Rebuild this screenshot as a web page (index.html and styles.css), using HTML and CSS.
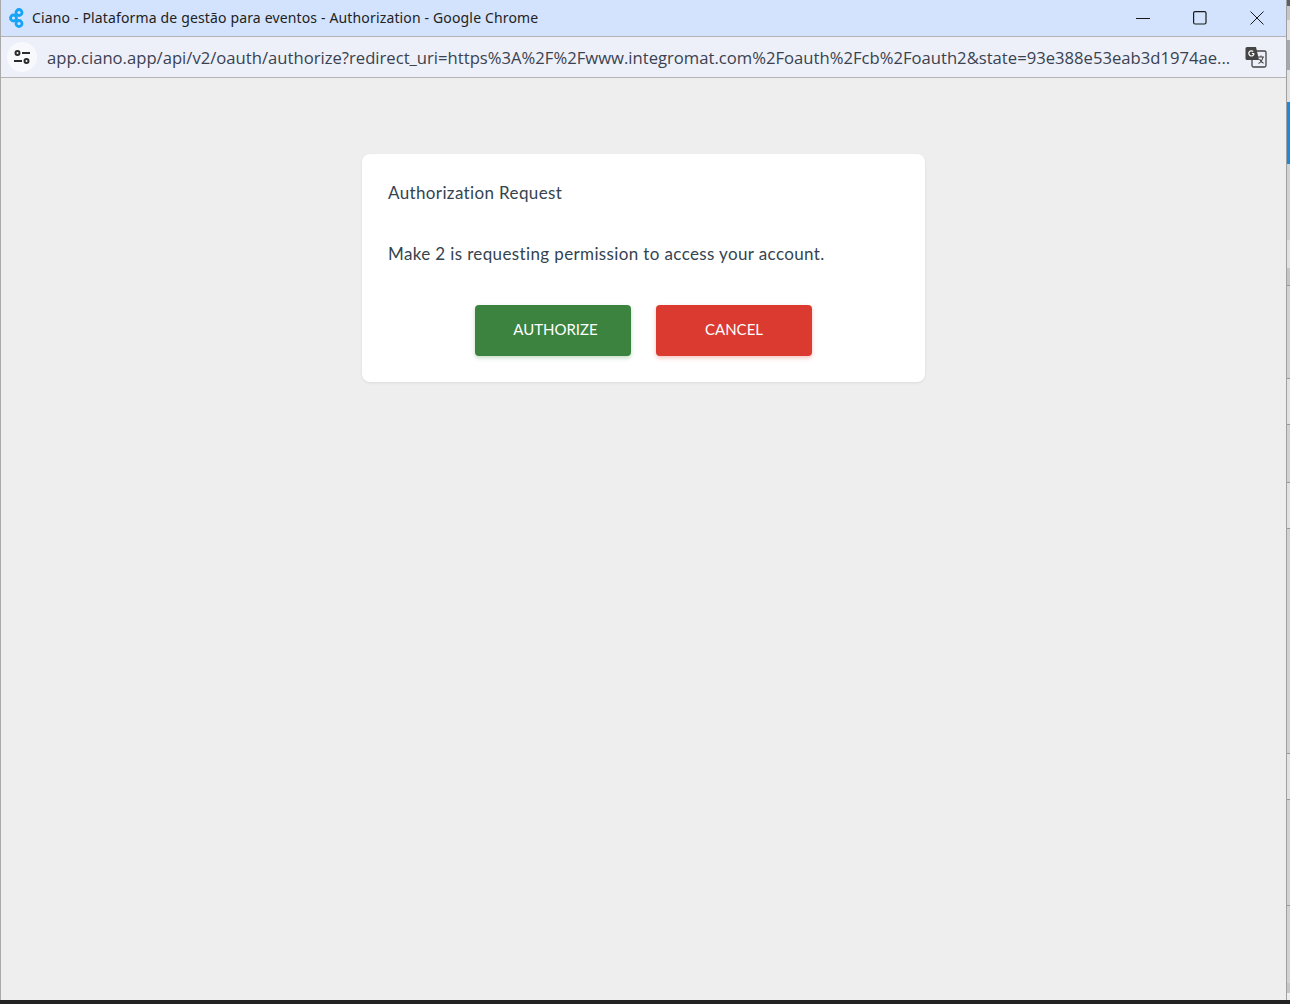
FILE: index.html
```html
<!DOCTYPE html>
<html lang="en">
<head>
    <meta charset="UTF-8">
    <meta name="viewport" content="width=device-width, initial-scale=1.0">
    <title>Ciano - Plataforma de gestão para eventos - Authorization - Google Chrome</title>
    <link rel="stylesheet" href="styles.css">
</head>
<body>
    <div class="screen">
        <div class="window">
            <div class="titlebar">
                <svg class="app-logo" width="16" height="20" viewBox="0 0 16 20" fill="none" stroke="#18a4f6" stroke-width="2.800">
                    <circle cx="10" cy="4.500" r="3"/>
                    <circle cx="4.500" cy="10" r="3"/>
                    <circle cx="10" cy="15.500" r="3"/>
                </svg>
                <span class="window-title">Ciano - Plataforma de gestão para eventos - Authorization - Google Chrome</span>
                <div class="window-controls">
                    <svg width="14" height="14" viewBox="0 0 14 14" stroke="#1a1a1a" stroke-width="1" fill="none"><path d="M0 7.500h14"/></svg>
                    <svg width="14" height="14" viewBox="0 0 14 14" stroke="#1a1a1a" stroke-width="1.200" fill="none"><rect x=".6" y=".6" width="12.400" height="12.400" rx="1.500"/></svg>
                    <svg width="14" height="14" viewBox="0 0 14 14" stroke="#1a1a1a" stroke-width="1" fill="none"><path d="M.5.500l13 13M13.500.500l-13 13"/></svg>
                </div>
            </div>
            <div class="addressbar">
                <div class="site-info">
                    <svg width="16" height="14" viewBox="0 0 16 14" fill="none" stroke="#2b2b2b" stroke-width="2"><circle cx="3.500" cy="3" r="2"/><path d="M8 3h8M0 11h8"/><circle cx="12.500" cy="11" r="2"/></svg>
                </div>
                <span class="url">app.ciano.app/api/v2/oauth/authorize?redirect_uri=https%3A%2F%2Fwww.integromat.com%2Foauth%2Fcb%2Foauth2&amp;state=93e388e53eab3d1974ae...</span>
                <svg class="translate" width="22" height="22" viewBox="0 0 22 22">
                    <rect x="7" y="5" width="14" height="16" rx="1.500" fill="#edf0f9" stroke="#444" stroke-width="1.300"/>
                    <path d="M2 1h9l3 13H2a1.500 1.500 0 0 1-1.500-1.500v-10A1.500 1.500 0 0 1 2 1z" fill="#444"/>
                    <path d="M9 7.500H6.800M9 7.500a2.600 2.600 0 1 1-.8-2" fill="none" stroke="#fff" stroke-width="1.200"/>
                    <path d="M13 11h6M16 9.500v1.500M18 11c-.6 3-2.400 5.500-4.500 6.500M14.500 13c.8 2 2.500 3.500 4 4.300" fill="none" stroke="#444" stroke-width="1.100"/>
                </svg>
            </div>
            <main class="content">
                <div class="card">
                    <h1 class="card-title">Authorization Request</h1>
                    <p class="card-text">Make 2 is requesting permission to access your account.</p>
                    <div class="card-actions">
                        <button class="btn btn-authorize">AUTHORIZE</button>
                        <button class="btn btn-cancel">CANCEL</button>
                    </div>
                </div>
            </main>
        </div>
        <!-- bits of the window behind, showing past the right edge -->
        <div class="side-strip">
            <div class="seg seg-dark h-6"></div>
            <div class="seg seg-mid h-14"></div>
            <div class="seg seg-light h-20"></div>
            <div class="seg seg-steel h-30"></div>
            <div class="seg seg-light h-32"></div>
            <div class="seg seg-blue h-62"></div>
            <div class="seg seg-base h-76"></div>
            <div class="seg seg-light h-28"></div>
            <div class="seg seg-mid h-17"></div>
            <div class="seg seg-base seg-line h-93"></div>
            <div class="seg seg-light seg-line h-46"></div>
            <div class="seg seg-base seg-line h-58"></div>
            <div class="seg seg-light seg-line h-46"></div>
            <div class="seg seg-base seg-line h-225"></div>
            <div class="seg seg-light seg-line h-46"></div>
            <div class="seg seg-base seg-line h-106"></div>
            <div class="seg seg-base seg-line h-78"></div>
            <div class="seg seg-mid h-10"></div>
        </div>
    </div>
    <div class="taskbar-edge"></div>
</body>
</html>
```

FILE: styles.css
```css
* {
    box-sizing: border-box;
}

html,
body {
    margin: 0;
    height: 1004px;
    overflow: hidden;
}

body {
    display: flex;
    flex-direction: column;
    background: #eeeeee;
}

.screen {
    display: flex;
    height: 1000px;
}

.window {
    width: 1287px;
    flex: none;
    display: flex;
    flex-direction: column;
    border-left: 1px solid #a9a9a9;
    border-right: 1px solid #a0a0a0;
}

.titlebar {
    height: 37px;
    flex: none;
    display: flex;
    align-items: center;
    padding-left: 8px;
    background: #d3e3fd;
    border-bottom: 1px solid #b4b4b4;
}

.app-logo {
    flex: none;
}

.window-title {
    margin-left: 7px;
    padding-bottom: 2px;
    font-family: "Noto Sans", sans-serif;
    font-size: 14px;
    letter-spacing: 0.15px;
    color: #222;
    white-space: nowrap;
}

.window-controls {
    margin-left: auto;
    padding-right: 22px;
    display: flex;
    gap: 43px;
}

.addressbar {
    height: 41px;
    flex: none;
    display: flex;
    align-items: center;
    padding-left: 6px;
    background: #edf0f9;
    border-bottom: 1px solid #b4b4b4;
}

.site-info {
    width: 30px;
    height: 30px;
    flex: none;
    display: flex;
    align-items: center;
    justify-content: center;
    border-radius: 50%;
    background: #f8f9fd;
}

.url {
    margin-left: 10px;
    font-family: "Open Sans", sans-serif;
    font-size: 16.650px;
    color: #3a4250;
    white-space: nowrap;
}

.translate {
    margin-left: auto;
    margin-right: 19px;
    flex: none;
}

.content {
    flex: 1;
    background: #eeeeee;
    padding: 76px 0 0 361px;
}

.card {
    width: 563px;
    height: 228px;
    padding: 26px;
    background: #fff;
    border-radius: 8px;
    box-shadow: 0 1px 3px rgba(0, 0, 0, 0.08);
    font-family: "Lato", sans-serif;
    color: #34444f;
}

.card-title {
    margin: 0;
    font-size: 17px;
    font-weight: 400;
    line-height: 26px;
    letter-spacing: 0.37px;
}

.card-text {
    margin: 35px 0 0;
    font-size: 17px;
    line-height: 26px;
    letter-spacing: 0.37px;
}

.card-actions {
    margin-top: 38px;
    display: flex;
    justify-content: center;
    gap: 25px;
}

.btn {
    width: 156px;
    height: 51px;
    padding: 0 0 3px;
    border: none;
    border-radius: 4px;
    color: #fff;
    font-family: "Lato", sans-serif;
    font-size: 15px;
    cursor: pointer;
}

.btn-authorize {
    padding-left: 5px;
    background: #3b833f;
    box-shadow: 0 2px 4px rgba(59, 131, 63, 0.3);
}

.btn-cancel {
    background: #da3a2f;
    box-shadow: 0 2px 4px rgba(218, 58, 47, 0.3);
}

.side-strip {
    width: 3px;
    flex: none;
}

.seg-dark { background: #5a5f66; }
.seg-mid { background: #c4c6c9; }
.seg-light { background: #e2e2e2; }
.seg-steel { background: #a4a8b0; }
.seg-blue { background: #1f88d9; }
.seg-base { background: #d2d2d2; }
.seg-line { border-top: 1px solid #999; }

.h-6 { height: 6px; }
.h-10 { height: 10px; }
.h-14 { height: 14px; }
.h-17 { height: 17px; }
.h-20 { height: 20px; }
.h-28 { height: 28px; }
.h-30 { height: 30px; }
.h-32 { height: 32px; }
.h-46 { height: 46px; }
.h-58 { height: 58px; }
.h-62 { height: 62px; }
.h-76 { height: 76px; }
.h-78 { height: 78px; }
.h-93 { height: 93px; }
.h-106 { height: 106px; }
.h-225 { height: 225px; }

.taskbar-edge {
    height: 4px;
    background: #222;
}
```
